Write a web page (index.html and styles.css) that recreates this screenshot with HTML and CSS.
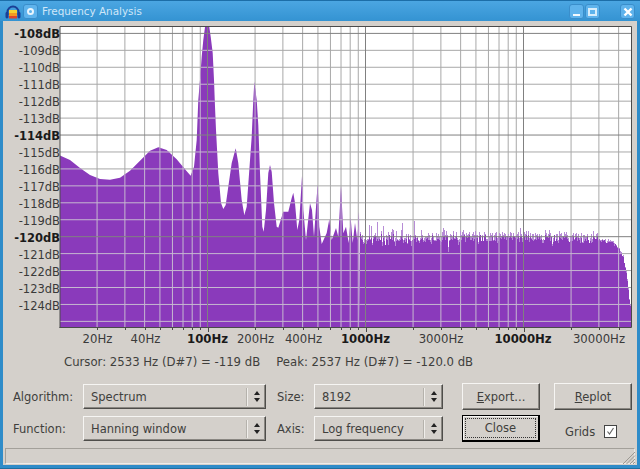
FILE: index.html
```html
<!DOCTYPE html>
<html lang="en">
<head>
<meta charset="utf-8">
<title>Frequency Analysis</title>
<link rel="stylesheet" href="styles.css">
</head>
<body>
<div class="window">
  <header class="titlebar">
    <svg class="app-icon" width="16" height="16" viewBox="0 0 16 16">
      <path class="phones" d="M2.5 11V8a5.5 5.5 0 0 1 11 0v3"/>
      <rect class="pad" x="0.5" y="8" width="3" height="6.5" rx="1.4"/>
      <rect class="pad" x="12.5" y="8" width="3" height="6.5" rx="1.4"/>
      <rect class="eq-y" x="4" y="6" width="8" height="3"/>
      <rect class="eq-o" x="4" y="9" width="8" height="3"/>
      <rect class="eq-r" x="4" y="12" width="8" height="2.5"/>
    </svg>
    <div class="tb-btn menu-btn"><span class="ring"></span></div>
    <div class="title">Frequency Analysis</div>
    <div class="tb-right">
      <div class="tb-btn"><span class="min-glyph"></span></div>
      <div class="tb-btn"><span class="max-glyph"></span></div>
      <div class="tb-btn close-btn">
        <svg width="10" height="10" viewBox="0 0 10 10"><path class="x-glyph" d="M1.5 1.5l7 7M8.5 1.5l-7 7"/></svg>
      </div>
    </div>
  </header>
  <main class="client">
    <svg class="plot" id="plot" width="634" height="329" viewBox="3 21 634 329">
      <defs><clipPath id="fill-clip"></clipPath></defs>
      <rect class="plot-bg" x="60" y="26" width="571" height="301"/>
      <g id="grid-under"></g>
      <g id="fill"></g>
      <g id="grid-over" clip-path="url(#fill-clip)"></g>
      <g id="grid-major"></g>
      <path class="plot-frame" d="M60 328V26.5H631.5V327.5H59.5"/>
      <g id="ticks"></g>
      <g class="ylabels">
        <text class="bold" x="60" y="37.5">-108dB</text>
        <text x="60" y="54.5">-109dB</text>
        <text x="60" y="71.5">-110dB</text>
        <text x="60" y="88.5">-111dB</text>
        <text x="60" y="105.5">-112dB</text>
        <text x="60" y="122.5">-113dB</text>
        <text class="bold" x="60" y="139.5">-114dB</text>
        <text x="60" y="156.5">-115dB</text>
        <text x="60" y="173.5">-116dB</text>
        <text x="60" y="190.5">-117dB</text>
        <text x="60" y="207.5">-118dB</text>
        <text x="60" y="224.5">-119dB</text>
        <text class="bold" x="60" y="241.5">-120dB</text>
        <text x="60" y="258.5">-121dB</text>
        <text x="60" y="275.5">-122dB</text>
        <text x="60" y="292.5">-123dB</text>
        <text x="60" y="309.5">-124dB</text>
      </g>
      <g class="xlabels">
        <text x="97.5" y="343">20Hz</text>
        <text x="145.5" y="343">40Hz</text>
        <text class="bold" x="207.5" y="343">100Hz</text>
        <text x="255.5" y="343">200Hz</text>
        <text x="303.5" y="343">400Hz</text>
        <text class="bold" x="365.5" y="343">1000Hz</text>
        <text x="441" y="343">3000Hz</text>
        <text class="bold" x="523" y="343">10000Hz</text>
        <text x="599" y="343">30000Hz</text>
      </g>
    </svg>
    <div class="readout">
      <span>Cursor: 2533 Hz (D#7) = -119 dB</span>
      <span>Peak: 2537 Hz (D#7) = -120.0 dB</span>
    </div>
    <div class="controls">
      <label class="lbl">Algorithm:</label>
      <div class="combo"><span>Spectrum</span><i class="spin"><b class="up"></b><b class="down"></b></i></div>
      <label class="lbl lbl2">Size:</label>
      <div class="combo"><span>8192</span><i class="spin"><b class="up"></b><b class="down"></b></i></div>
      <button class="btn col-btn"><u>E</u>xport...</button>
      <button class="btn"><u>R</u>eplot</button>

      <label class="lbl">Function:</label>
      <div class="combo"><span>Hanning window</span><i class="spin"><b class="up"></b><b class="down"></b></i></div>
      <label class="lbl lbl2">Axis:</label>
      <div class="combo"><span>Log frequency</span><i class="spin"><b class="up"></b><b class="down"></b></i></div>
      <button class="btn col-btn default-btn"><span class="focus">Close</span></button>
      <div class="grids">
        <span>Grids</span>
        <span class="check">
          <svg width="11" height="11" viewBox="0 0 11 11"><path class="tick" d="M2.5 5.5l2 2.5 4-6"/></svg>
        </span>
      </div>
    </div>
    <footer class="status">
      <svg class="grip" width="14" height="14" viewBox="0 0 14 14"><path class="grip-lines" d="M13 1L1 13M13 4.500L4.500 13M13 8L8 13M13 11L11 13"/></svg>
    </footer>
  </main>
</div>
<script src="script.js"></script>
</body>
</html>
```

FILE: styles.css
```css
* { box-sizing: border-box; }
html, body { margin: 0; padding: 0; }
body {
  width: 640px;
  height: 469px;
  overflow: hidden;
  font-family: "DejaVu Sans", sans-serif;
  font-size: 11px;
  color: #3f3f3d;
}
.window {
  width: 640px;
  height: 469px;
  display: flex;
  flex-direction: column;
  padding: 0 3px 3px;
  background: #2f8cc9;
  border-top: 1px solid #1c6ea8;
  border-bottom: 1px solid #1f6f9f;
}
.titlebar {
  height: 20px;
  flex: none;
  display: flex;
  align-items: center;
  margin: 0 -3px;
  padding: 0 5px 0 5px;
  background: linear-gradient(#4ba6e2, #3493d2);
}
.app-icon { flex: none; margin-top: 2px; }
.phones { fill: none; stroke: #1b3f96; stroke-width: 2; }
.pad { fill: #1b3f96; }
.eq-y { fill: #f6d232; }
.eq-o { fill: #f39a22; }
.eq-r { fill: #e0452a; }
.tb-btn {
  width: 15px;
  height: 15px;
  margin-top: 1px;
  flex: none;
  display: flex;
  align-items: center;
  justify-content: center;
  background: #5fb3ec;
  border: 1px solid #3a8ecb;
  border-radius: 3px;
}
.menu-btn { margin-left: 2px; }
.ring {
  width: 7px;
  height: 7px;
  border: 2px solid #eaf5fd;
  border-radius: 50%;
}
.title {
  margin-left: 4px;
  flex: 1;
  font-size: 10.4px;
  color: #cfe7f8;
}
.tb-right { display: flex; gap: 1px; }
.close-btn { margin-left: 19px; }
.min-glyph { width: 7px; height: 2px; margin-top: 6px; background: #f2f9fe; }
.max-glyph { width: 9px; height: 8px; border: 2px solid #d8edfb; }
.x-glyph { stroke: #fff; stroke-width: 2.4; fill: none; }
.client {
  flex: 1;
  min-height: 0;
  display: flex;
  flex-direction: column;
  background: #d4d0cb;
}
.plot { display: block; flex: none; }
.plot-bg { fill: #fff; }
.plot-frame { fill: none; stroke: #4a4a4a; stroke-width: 1; }
.spectrum { fill: #8a3abb; }
.spike { fill: #b78cd6; }
.column { fill: #8a3abb; }
.grid-white { stroke: #a8a8a8; stroke-width: 1; }
.grid-purple { stroke: #c6b8d0; stroke-width: 1; }
.grid-strong { stroke: #808080; stroke-width: 1; }
.tick-mark { stroke: #4a4a4a; stroke-width: 1; }
.ylabels text { text-anchor: end; font-size: 11.500px; fill: #3a3a3a; }
.xlabels text { text-anchor: middle; font-size: 11.700px; fill: #3a3a3a; }
svg text.bold { font-weight: bold; fill: #1a1a1a; }
.readout {
  height: 24px;
  flex: none;
  display: flex;
  align-items: center;
  gap: 16px;
  padding-left: 61px;
  font-size: 11.700px;
  margin-bottom: 9px;
}
.controls {
  flex: none;
  display: grid;
  grid-template-columns: 70px 183px 48px 129px 111px 78px;
  grid-template-rows: 27px 27px;
  row-gap: 5px;
  padding-left: 10px;
  align-items: center;
}
.lbl { font-size: 11.500px; }
.lbl2 { margin-left: 11px; }
.combo, .btn {
  border: 1px solid;
  border-color: #f6f5f3 #4e4d4a #4e4d4a #f6f5f3;
  box-shadow: inset -1px -1px 0 #8a8782;
  background: #d4d0cb;
}
.combo {
  height: 25px;
  display: flex;
  align-items: center;
  padding-left: 7px;
  font-size: 11.500px;
}
.combo span { flex: 1; }
.spin {
  width: 18px;
  height: 18px;
  flex: none;
  display: flex;
  flex-direction: column;
  align-items: center;
  justify-content: center;
  gap: 3px;
  border-left: 1px solid #f0eeeb;
  box-shadow: -1px 0 0 #b5b2ac;
}
.up, .down { width: 0; height: 0; border-left: 3.500px solid transparent; border-right: 3.500px solid transparent; }
.up { border-bottom: 4px solid #222; }
.down { border-top: 4px solid #222; }
.btn {
  width: 78px;
  height: 27px;
  padding: 0;
  font-family: inherit;
  font-size: 11.500px;
  color: #3f3f3d;
  text-align: center;
}
.col-btn { margin-left: 19px; }
.default-btn {
  border: 1px solid #000;
  border-right-width: 2px;
  border-bottom-width: 2px;
  box-shadow: inset 1px 1px 0 #f6f5f3;
  padding: 2px;
}
.focus {
  display: flex;
  height: 100%;
  align-items: center;
  justify-content: center;
  border: 1px dotted #333;
}
.grids {
  display: flex;
  align-items: center;
  gap: 9px;
  padding: 6px 0 0 11px;
  font-size: 11.500px;
}
.check {
  width: 13px;
  height: 13px;
  display: flex;
  align-items: center;
  justify-content: center;
  background: #fff;
  border: 1px solid #444;
}
.tick { fill: none; stroke: #666; stroke-width: 1.2; }
.status {
  flex: none;
  height: 16px;
  margin: 6px 2px 0;
  position: relative;
  border: 1px solid;
  border-color: #a3a09a #e9e7e4 #efedea #a3a09a;
}
.grip { position: absolute; right: -2px; bottom: -2px; }
.grip-lines { stroke: #9c9993; stroke-width: 1; fill: none; }
```

FILE: script.js
```js
var NS = "http://www.w3.org/2000/svg";
function el(parent, name, attrs) {
  var e = document.createElementNS(NS, name);
  for (var k in attrs) e.setAttribute(k, attrs[k]);
  parent.appendChild(e);
  return e;
}

var BOTTOM = 327;
var shape = [[60,155.5],[70,160],[80,168],[90,175],[100,179],[110,179.7],[120,177.7],[130,170.7],[140,160.7],[150,150.7],[158.3,147.3],[166.7,150],[176.7,159.3],[185,169.3],[190.7,175.7],[194,166.7],[196.7,140],[198.3,100],[200,80],[201.7,56.7],[203.3,40],[205,27],[209.3,27],[210.7,36.7],[212.7,53],[214,80],[215,106.7],[216,130],[218.3,173],[221,203],[223.3,209],[225.7,205],[228.3,186.7],[231.7,163],[235.7,148.3],[238.3,163],[241.7,200],[244.3,215],[246.7,206.7],[249.3,170],[251.7,136.7],[253.3,100],[254.3,82],[256.7,100],[258.3,125],[260,173],[262.3,226.7],[263.7,231.7],[266,210],[268.3,173],[270,165],[271.7,171.7],[274,203],[276.7,226.7],[278.3,227.7],[280.7,220],[283.3,211.7],[288.3,211.7],[291.7,198],[293.3,192.7],[295,203],[297.3,230],[299.3,220],[302,176],[303.3,210],[306,240],[310,203.3],[312,210],[314,236.7],[316.7,196.7],[317.7,185],[319.3,226.7],[321.7,244],[326.7,233],[329.3,219.3],[331.7,240],[336,228],[338.3,236.7],[341,186],[343.3,233.3],[346,226.7],[348.7,243],[350.7,218],[352.7,243],[355,223],[357.3,240],[359,212]];
var pts = shape.map(function (p) { return p.join(","); });
pts.unshift("60," + BOTTOM);
var points = pts.join(" ") + " 360," + BOTTOM;
var fill = document.getElementById("fill");
var clip = document.getElementById("fill-clip");

/* noise floor, column by column */
var floor = [[359,237],[420,238],[500,238],[560,239],[597,239],[612,243],[617,247],[623,258],[627,280],[630,307],[632,316]];
function floorAt(x) {
  for (var i = 1; i < floor.length; i++) {
    if (x <= floor[i][0]) {
      var a = floor[i - 1], b = floor[i];
      return a[1] + (b[1] - a[1]) * (x - a[0]) / (b[0] - a[0]);
    }
  }
  return 316;
}
var seed = 7;
function rnd() { seed = (seed * 16807) % 2147483647; return seed / 2147483647; }
var tips = { 346:225, 350:218, 354:223, 358:213, 369:225, 371:226, 377:222, 383:226, 392:229, 396:231, 402:223, 414:221, 388:232, 428:233, 436:233, 442:232, 456:232, 460:231, 473:232, 490:233, 513:233, 533:234, 557:234, 583:235 };
var dips = { 448:252, 366:244, 351:246, 385:245, 395:246, 431:244, 440:245, 552:246, 458:245, 523:244, 478:244, 497:243 };
var solid = "", light = "";
for (var x = 360; x < 631; x++) {
  var f = floorAt(x);
  var amp = x < 600 ? 1 : 0.4;
  var y = f + (rnd() * 8 - 3.5) * amp;
  if (x < 425 && rnd() < 0.25) y += 4;
  if (dips[x]) y = dips[x];
  var tip = y - rnd() * 6 * amp;
  if (rnd() < 0.1) tip -= 3 * amp;
  if (tips[x]) tip = tips[x];
  solid += "M" + x + " " + y.toFixed(0) + "H" + (x + 1) + "V" + BOTTOM + "H" + x + "Z";
  light += "M" + x + " " + tip.toFixed(0) + "H" + (x + 1) + "V" + BOTTOM + "H" + x + "Z";
}
el(fill, "path", { "class": "spike", d: light });
el(fill, "polygon", { "class": "spectrum", points: points });
el(fill, "path", { "class": "column", d: solid });
el(clip, "polygon", { points: points });
el(clip, "path", { d: solid });

/* grid: gray on the white background, pale where it crosses the spectrum */
var under = document.getElementById("grid-under");
var over = document.getElementById("grid-over");
var strong = document.getElementById("grid-major");
var ticks = document.getElementById("ticks");
function gridLine(x1, y1, x2, y2, major) {
  var a = { x1: x1, y1: y1, x2: x2, y2: y2 };
  if (major) {
    a["class"] = "grid-strong";
    el(strong, "line", a);
  } else {
    a["class"] = "grid-white";
    el(under, "line", a);
    a["class"] = "grid-purple";
    el(over, "line", a);
  }
}
var freqs = [];
[10, 100, 1000, 10000].forEach(function (d) {
  for (var m = 1; m < 10; m++) freqs.push(d * m);
});
freqs.push(100000);
freqs.forEach(function (f) {
  var x = 207.5 + 158 * Math.log10(f / 100);
  if (x < 60 || x > 631) return;
  var major = f === 100 || f === 1000 || f === 10000;
  gridLine(x, 26, x, BOTTOM, major);
  var tx = Math.round(x) + 0.5;
  el(ticks, "line", { x1: tx, x2: tx, y1: BOTTOM, y2: BOTTOM + (major ? 5 : 3), "class": "tick-mark" });
});
for (var i = 0; i < 18; i++) {
  var y = 33.4 + 16.94 * i;
  gridLine(60, y, 631, y, i % 6 === 0);
}
```
